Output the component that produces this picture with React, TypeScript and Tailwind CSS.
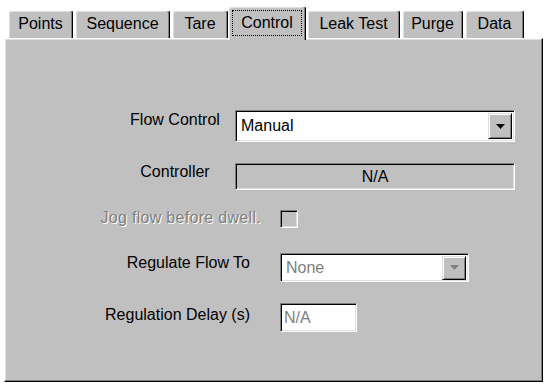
import React from 'react';

interface Tab {
  name: string;
  width: number;
  gap: number;
}

const tabs: Tab[] = [
  { name: 'Points', width: 65, gap: 0 },
  { name: 'Sequence', width: 95, gap: 2 },
  { name: 'Tare', width: 56, gap: 2 },
  { name: 'Control', width: 78, gap: 0 },
  { name: 'Leak Test', width: 93, gap: 1 },
  { name: 'Purge', width: 61, gap: 2 },
  { name: 'Data', width: 59, gap: 2 },
];

const sunken =
  'border border-t-[#808080] border-l-[#808080] border-b-white border-r-white shadow-[inset_1px_1px_0_#000000,inset_-1px_-1px_0_#dfdfdf]';
const raised =
  'border border-t-[#dfdfdf] border-l-[#dfdfdf] border-b-black border-r-black shadow-[inset_1px_1px_0_#ffffff,inset_-1px_-1px_0_#808080]';

function Arrow({ color }: { color: string }) {
  return (
    <svg width="9" height="5" viewBox="0 0 9 5">
      <polygon points="0,0 9,0 4.5,5" fill={color} />
    </svg>
  );
}

function TabButton({ tab }: { tab: Tab }) {
  const selected = tab.name === 'Control';
  if (selected) {
    return (
      <div
        className="relative z-10 -mb-[2px] flex h-[34px] shrink-0 items-start justify-center rounded-t-[3px] border-l border-t border-r border-l-white border-t-white border-r-black bg-[#c0c0c0] pt-[3px] shadow-[inset_-1px_0_0_#808080,inset_1px_1px_0_#dfdfdf]"
        style={{ width: tab.width, marginLeft: tab.gap }}
      >
        <div className="flex h-[26px] w-[70px] items-center justify-center border border-dotted border-black">
          <span className="leading-[18px]">{tab.name}</span>
        </div>
      </div>
    );
  }
  return (
    <div
      className="flex h-[28px] shrink-0 items-start justify-center rounded-t-[3px] border-l border-t border-r border-l-white border-t-white border-r-black bg-[#c0c0c0] pt-[4px] shadow-[inset_-1px_0_0_#808080,inset_1px_1px_0_#dfdfdf]"
      style={{ width: tab.width, marginLeft: tab.gap }}
    >
      <span className="leading-[18px]">{tab.name}</span>
    </div>
  );
}

export default function App() {
  return (
    <div className="h-[387px] w-[550px] overflow-hidden bg-white text-[16px] text-black font-['Liberation_Sans',Arial,sans-serif]">
      {/* Tab strip */}
      <div className="flex h-[38px] items-end pl-[8px]">
        {tabs.map((tab) => (
          <TabButton key={tab.name} tab={tab} />
        ))}
      </div>

      {/* Page */}
      <div className="ml-[4px] h-[344px] w-[539px] border-l border-t border-r border-b border-l-white border-t-white border-r-black border-b-black bg-[#c0c0c0] shadow-[inset_-1px_-1px_0_#808080,inset_1px_1px_0_#dfdfdf]">
        <div className="flex flex-col pt-[71px]">
          {/* Flow Control */}
          <div className="flex h-[32px] items-start">
            <div className="ml-[115px] mt-[1px] w-[110px] text-center leading-[18px]">Flow Control</div>
            <div className={`ml-[5px] flex h-[32px] w-[280px] items-center bg-white ${sunken}`}>
              <span className="flex-1 pl-[5px] leading-[18px]">Manual</span>
              <div className={`mr-[2px] flex h-[26px] w-[24px] items-center justify-center bg-[#c0c0c0] ${raised}`}>
                <Arrow color="#000000" />
              </div>
            </div>
          </div>

          {/* Controller */}
          <div className="mt-[21px] flex h-[27px] items-start">
            <div className="ml-[115px] w-[110px] text-center leading-[18px]">Controller</div>
            <div className={`ml-[5px] flex h-[27px] w-[280px] items-center justify-center bg-[#c0c0c0] ${sunken}`}>
              <span className="leading-[18px]">N/A</span>
            </div>
          </div>

          {/* Jog flow */}
          <div className="mt-[20px] flex h-[18px] items-start">
            <div className="ml-[56px] -mt-[1px] w-[200px] text-right leading-[18px] tracking-[0.3px] text-[#808080] [text-shadow:1px_1px_0_#ffffff]">
              Jog flow before dwell.
            </div>
            <div className={`ml-[19px] h-[18px] w-[18px] bg-[#c0c0c0] ${sunken}`} />
          </div>

          {/* Regulate Flow To */}
          <div className="mt-[25px] flex h-[29px] items-start">
            <div className="ml-[45px] mt-[1px] w-[200px] text-right leading-[18px]">Regulate Flow To</div>
            <div className={`ml-[30px] flex h-[29px] w-[189px] items-center bg-white ${sunken}`}>
              <span className="flex-1 pl-[5px] leading-[18px] text-[#808080]">None</span>
              <div className={`mr-[2px] flex h-[24px] w-[24px] items-center justify-center bg-[#c0c0c0] ${raised}`}>
                <Arrow color="#808080" />
              </div>
            </div>
          </div>

          {/* Regulation Delay */}
          <div className="mt-[21px] flex h-[29px] items-start">
            <div className="ml-[45px] mt-[3px] w-[200px] text-right leading-[18px]">Regulation Delay (s)</div>
            <div className={`ml-[30px] flex h-[29px] w-[77px] items-center bg-white ${sunken}`}>
              <span className="pl-[3px] leading-[18px] text-[#808080]">N/A</span>
            </div>
          </div>
        </div>
      </div>
    </div>
  );
}
